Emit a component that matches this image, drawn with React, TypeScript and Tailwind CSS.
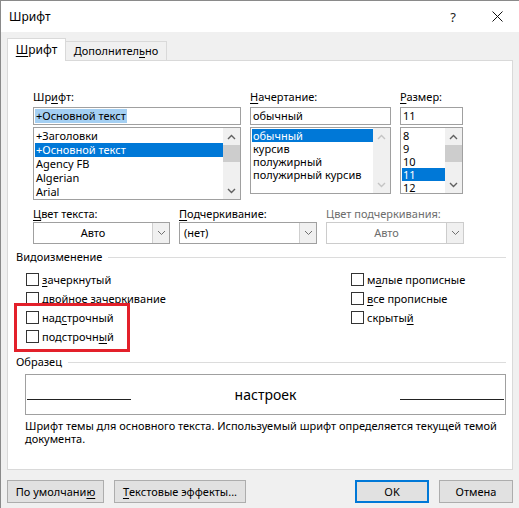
import React from "react";

function Chevron({ up, color = "#606060" }: { up?: boolean; color?: string }) {
  return (
    <svg width="9" height="6" viewBox="0 0 9 6">
      <path
        d={up ? "M1 5 L4.5 1.5 L8 5" : "M1 1 L4.5 4.5 L8 1"}
        fill="none"
        stroke={color}
        strokeWidth="1.4"
      />
    </svg>
  );
}

function Scroll({ thumb, disabled }: { thumb?: boolean; disabled?: boolean }) {
  const c = disabled ? "#c4c4c4" : "#606060";
  return (
    <div className="flex w-[17px] flex-col bg-[#f0f0f0]">
      <div className="flex h-[17px] items-center justify-center">
        <Chevron up color={c} />
      </div>
      <div className="flex-1">
        {thumb && <div className="mx-auto h-[17px] w-[17px] bg-[#cdcdcd]" />}
      </div>
      <div className="flex h-[17px] items-center justify-center">
        <Chevron color={c} />
      </div>
    </div>
  );
}

function Combo({ value, className, center, disabled }: { value: string; className: string; center?: boolean; disabled?: boolean }) {
  return (
    <div className={`flex h-[22px] border bg-white ${disabled ? "border-[#cccccc] text-[#6d6d6d]" : "border-[#a0a0a0]"} ${className}`}>
      <div className={`flex flex-1 items-center ${center ? "justify-center" : "pl-[4px]"}`}>{value}</div>
      <div className={`flex w-[17px] items-center justify-center border-l bg-[#f0f0f0] ${disabled ? "border-[#cccccc]" : "border-[#cfcfcf]"}`}>
        <svg width="9" height="6" viewBox="0 0 9 6">
          <path d="M1 1 L4.5 4.5 L8 1" fill="none" stroke="#707070" strokeWidth="1" />
        </svg>
      </div>
    </div>
  );
}

function Check({ children }: { children: React.ReactNode }) {
  return (
    <div className="flex h-[19px] items-center">
      <div className="h-[13px] w-[13px] border border-[#333333] bg-white" />
      <span className="ml-[3px]">{children}</span>
    </div>
  );
}

function Button({ children, className }: { children: React.ReactNode; className: string }) {
  return (
    <div className={`flex h-[23px] items-center justify-center border bg-[#e1e1e1] ${className}`}>{children}</div>
  );
}

export default function App() {
  return (
    <div className="relative h-[508px] w-[519px] overflow-hidden border-l border-t border-[#8a8a8a] bg-[#f0f0f0] font-['Noto_Sans',sans-serif] text-[11px] leading-[16px] text-black">
      {/* title bar */}
      <div className="flex h-[31px] items-center bg-white">
        <span className="ml-[8px] text-[12px]">Шрифт</span>
        <span className="ml-auto mr-[36px] text-[13px] text-[#222]">?</span>
        <svg width="11" height="11" viewBox="0 0 11 11" className="mr-[16px]">
          <path d="M0.5 0.5 L10.5 10.5 M10.5 0.5 L0.5 10.5" stroke="#111" strokeWidth="1" />
        </svg>
      </div>

      <div className="pl-[6px] pt-[6px]">
        {/* tabs */}
        <div className="flex items-end">
          <div className="relative z-10 -mb-px flex h-[23px] w-[59px] items-center justify-center border border-b-0 border-[#d9d9d9] bg-white pb-[1px] text-[12px]">
            <span><u className="underline-offset-2">Ш</u>рифт</span>
          </div>
          <div className="-ml-px flex h-[19px] w-[102px] items-center justify-center border border-b-0 border-[#d9d9d9] bg-[#f0f0f0]">
            <span>Дополнител<u className="underline-offset-2">ь</u>но</span>
          </div>
        </div>

        {/* panel */}
        <div className="flex h-[410px] w-[506px] flex-col border border-[#d9d9d9] bg-white pl-[8px]">
          {/* font / style / size */}
          <div className="ml-[17px] mt-[28px] flex gap-[9px]">
            <div className="flex w-[208px] flex-col">
              <div>Шр<u className="underline-offset-2">и</u>фт:</div>
              <div className="mt-[2px] flex h-[18px] items-center border border-[#a0a0a0] pl-[1px]">
                <span className="bg-[#a4cff2] px-[1px] leading-[14px]">+Основной текст</span>
              </div>
              <div className="mt-[2px] flex h-[73px] border border-[#a0a0a0]">
                <div className="flex flex-1 flex-col pl-[1px] pt-[1px] leading-[14px]">
                  <div className="pl-[1px]">+Заголовки</div>
                  <div className="bg-[#0078d7] pl-[1px] text-white">+Основной текст</div>
                  <div className="pl-[1px]">Agency FB</div>
                  <div className="pl-[1px]">Algerian</div>
                  <div className="pl-[1px]">Arial</div>
                </div>
                <Scroll thumb />
              </div>
            </div>

            <div className="flex w-[141px] flex-col">
              <div><u className="underline-offset-2">Н</u>ачертание:</div>
              <div className="mt-[2px] flex h-[18px] items-center border border-[#a0a0a0] pl-[2px]">обычный</div>
              <div className="mt-[2px] flex h-[67px] border border-[#a0a0a0]">
                <div className="flex flex-1 flex-col pl-[1px] pt-[1px] leading-[13px]">
                  <div className="bg-[#0078d7] pl-[1px] text-white">обычный</div>
                  <div className="pl-[1px]">курсив</div>
                  <div className="pl-[1px]">полужирный</div>
                  <div className="whitespace-nowrap pl-[1px]">полужирный курсив</div>
                </div>
                <Scroll disabled />
              </div>
            </div>

            <div className="flex w-[63px] flex-col">
              <div><u className="underline-offset-2">Р</u>азмер:</div>
              <div className="mt-[2px] flex h-[18px] items-center border border-[#a0a0a0] pl-[2px]">11</div>
              <div className="mt-[2px] flex h-[67px] border border-[#a0a0a0]">
                <div className="flex flex-1 flex-col pl-[1px] pt-[1px] leading-[13px]">
                  <div className="pl-[1px]">8</div>
                  <div className="pl-[1px]">9</div>
                  <div className="pl-[1px]">10</div>
                  <div className="bg-[#0078d7] pl-[1px] text-white">11</div>
                  <div className="pl-[1px]">12</div>
                </div>
                <Scroll thumb />
              </div>
            </div>
          </div>

          {/* colour / underline */}
          <div className="ml-[17px] mt-[6px] flex gap-[9px]">
            <div className="flex w-[137px] flex-col">
              <div><u className="underline-offset-2">Ц</u>вет текста:</div>
              <Combo value="Авто" center className="w-[137px]" />
            </div>
            <div className="flex w-[138px] flex-col">
              <div><u className="underline-offset-2">П</u>одчеркивание:</div>
              <Combo value="(нет)" className="w-[138px]" />
            </div>
            <div className="flex w-[138px] flex-col">
              <div className="text-[#6d6d6d]">Цвет подчеркивания:</div>
              <Combo value="Авто" center disabled className="w-[138px]" />
            </div>
          </div>

          {/* effects */}
          <div className="mt-[5px] flex items-center pr-[6px]">
            <span>Видоизменение</span>
            <div className="ml-[6px] h-px flex-1 bg-[#dcdcdc]" />
          </div>
          <div className="ml-[10px] mt-[5px] flex">
            <div className="flex w-[325px] flex-col">
              <Check><u className="underline-offset-2">з</u>ачеркнутый</Check>
              <Check>двойное зачеркивание</Check>
              <Check>над<u className="underline-offset-2">с</u>трочный</Check>
              <Check>подстрочн<u className="underline-offset-2">ы</u>й</Check>
            </div>
            <div className="flex flex-col">
              <Check>м<u className="underline-offset-2">а</u>лые прописные</Check>
              <Check><u className="underline-offset-2">в</u>се прописные</Check>
              <Check>скрыты<u className="underline-offset-2">й</u></Check>
            </div>
          </div>

          {/* preview */}
          <div className="mt-[8px] flex items-center pr-[6px]">
            <span>Образец</span>
            <div className="ml-[6px] h-px flex-1 bg-[#dcdcdc]" />
          </div>
          <div className="ml-[9px] mt-[4px] flex h-[41px] w-[481px] border border-[#a0a0a0] px-[1px]">
            <div className="mt-[24px] h-px w-[104px] bg-[#222]" />
            <div className="flex-1 pt-[11px] text-center text-[14px] leading-[18px]">настроек</div>
            <div className="mt-[24px] h-px w-[104px] bg-[#222]" />
          </div>
          <div className="ml-[9px] mt-[4px] whitespace-nowrap leading-[13px]">
            Шрифт темы для основного текста. Используемый шрифт определяется текущей темой
            <br />
            документа.
          </div>
        </div>

        {/* buttons */}
        <div className="mt-[10px] flex">
          <Button className="w-[97px] border-[#adadad]">По умолчани<u className="underline-offset-2">ю</u></Button>
          <Button className="ml-[10px] w-[132px] border-[#adadad]"><u className="underline-offset-2">Т</u>екстовые эффекты...</Button>
          <Button className="ml-[109px] w-[74px] border-[#0078d7] shadow-[inset_0_0_0_1px_#0078d7]">OK</Button>
          <Button className="ml-[10px] w-[74px] border-[#adadad]">Отмена</Button>
        </div>
      </div>

      {/* red annotation frame */}
      <div className="absolute left-[13px] top-[302px] h-[49px] w-[116px] border-[3px] border-[#e3202a]" />
    </div>
  );
}
